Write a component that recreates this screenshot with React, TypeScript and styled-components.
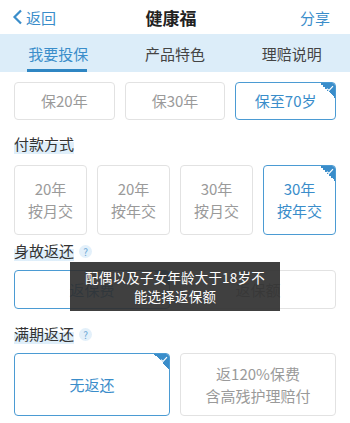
import React from 'react'
import styled, { createGlobalStyle } from 'styled-components'

const BLUE = '#3a8dca'

const GlobalStyle = createGlobalStyle`
  html, body {
    margin: 0;
    padding: 0;
    background: #fff;
  }
  body {
    font-family: "Noto Sans CJK SC", "Noto Sans", sans-serif;
    -webkit-font-smoothing: antialiased;
  }
  * { box-sizing: border-box; }
`

const Page = styled.div`
  width: 350px;
  height: 423px;
  overflow: hidden;
  background: #fff;
`

const Header = styled.header`
  height: 34px;
  display: grid;
  grid-template-columns: 1fr auto 1fr;
  align-items: center;
  padding: 0 20px 0 12px;
`

const Back = styled.div`
  display: flex;
  align-items: center;
  gap: 3px;
  color: ${BLUE};
  font-size: 15px;
`

const Title = styled.h1`
  margin: 0;
  font-size: 17px;
  font-weight: 700;
  color: #222;
`

const Share = styled.div`
  justify-self: end;
  color: ${BLUE};
  font-size: 15px;
`

const TabBar = styled.nav`
  height: 38px;
  background: #dcedf9;
  display: grid;
  grid-template-columns: repeat(3, 1fr);
`

const Tab = styled.div<{ $active?: boolean }>`
  position: relative;
  display: flex;
  align-items: center;
  justify-content: center;
  font-size: 15px;
  color: ${({ $active }) => ($active ? BLUE : '#444')};

  &::after {
    content: '';
    display: ${({ $active }) => ($active ? 'block' : 'none')};
    position: absolute;
    bottom: 0;
    left: 50%;
    width: 60px;
    margin-left: -31px;
    height: 3px;
    background: #2f86c3;
  }
`

const Content = styled.main`
  padding: 10px 14px 0;
`

const Options = styled.div<{ $cols: number; $h: number }>`
  display: grid;
  grid-template-columns: repeat(${({ $cols }) => $cols}, 1fr);
  gap: 10px;
  height: ${({ $h }) => $h}px;
`

const Option = styled.div<{ $selected?: boolean }>`
  position: relative;
  display: flex;
  flex-direction: column;
  align-items: center;
  justify-content: center;
  border: 1px solid ${({ $selected }) => ($selected ? '#4b9bd3' : '#e2e2e2')};
  border-radius: 4px;
  font-size: 15px;
  line-height: 22px;
  color: ${({ $selected }) => ($selected ? BLUE : '#9a9a9a')};
  overflow: hidden;
`

const Corner = styled.span`
  position: absolute;
  top: 0;
  right: 0;
  width: 15px;
  height: 15px;
  background: linear-gradient(45deg, transparent 50%, #3a8dca 50%);
  display: flex;
  align-items: flex-start;
  justify-content: flex-end;
`

const Label = styled.div<{ $top: number; $bottom: number }>`
  display: flex;
  align-items: center;
  gap: 5px;
  height: 22px;
  margin: ${({ $top, $bottom }) => `${$top}px 0 ${$bottom}px`};
  font-size: 15px;
  color: #333;
`

const LabelText = styled.span`
  background: linear-gradient(to bottom, transparent 45%, rgba(210, 232, 248, 0.7) 45%);
`

const Help = styled.span`
  display: inline-flex;
  align-items: center;
  justify-content: center;
  width: 13px;
  height: 13px;
  margin-top: 3px;
  border-radius: 50%;
  background: #e3f0fa;
  color: #6ba8d6;
  font-size: 10px;
  line-height: 1;
`

const ToastRow = styled.div`
  position: relative;
`

const Toast = styled.div`
  position: absolute;
  top: -8px;
  left: 56px;
  width: 210px;
  height: 49px;
  background: rgba(48, 48, 48, 0.92);
  color: #fff;
  font-size: 13.5px;
  line-height: 19px;
  text-align: center;
  display: flex;
  flex-direction: column;
  align-items: center;
  justify-content: center;
  letter-spacing: 0.2px;
`

const Check = () => (
  <Corner>
    <svg width="8" height="7" viewBox="0 0 8 7" style={{ marginTop: 2, marginRight: 1 }}>
      <path d="M1 3.6 L3 5.4 L7 1.2" fill="none" stroke="#fff" strokeWidth="1.2" />
    </svg>
  </Corner>
)

const App = () => {
  return (
    <Page>
      <GlobalStyle />
      <Header>
        <Back>
          <svg width="11" height="16" viewBox="0 0 11 16">
            <path d="M9 1.5 L2.5 8 L9 14.5" fill="none" stroke={BLUE} strokeWidth="2.2" />
          </svg>
          返回
        </Back>
        <Title>健康福</Title>
        <Share>分享</Share>
      </Header>
      <TabBar>
        <Tab $active>我要投保</Tab>
        <Tab>产品特色</Tab>
        <Tab>理赔说明</Tab>
      </TabBar>
      <Content>
        <Options $cols={3} $h={38}>
          <Option>保20年</Option>
          <Option>保30年</Option>
          <Option $selected>
            保至70岁
            <Check />
          </Option>
        </Options>

        <Label $top={12} $bottom={11}>
          <LabelText>付款方式</LabelText>
        </Label>
        <Options $cols={4} $h={70}>
          <Option>
            <span>20年</span>
            <span>按月交</span>
          </Option>
          <Option>
            <span>20年</span>
            <span>按年交</span>
          </Option>
          <Option>
            <span>30年</span>
            <span>按月交</span>
          </Option>
          <Option $selected>
            <span>30年</span>
            <span>按年交</span>
            <Check />
          </Option>
        </Options>

        <Label $top={4} $bottom={9}>
          <LabelText>身故返还</LabelText>
          <Help>?</Help>
        </Label>
        <ToastRow>
          <Options $cols={2} $h={39}>
            <Option $selected>
              返保费
              <Check />
            </Option>
            <Option>返保额</Option>
          </Options>
          <Toast>
            <span>配偶以及子女年龄大于18岁不</span>
            <span>能选择返保额</span>
          </Toast>
        </ToastRow>

        <Label $top={13} $bottom={9}>
          <LabelText>满期返还</LabelText>
          <Help>?</Help>
        </Label>
        <Options $cols={2} $h={63}>
          <Option $selected>
            无返还
            <Check />
          </Option>
          <Option>
            <span>返120%保费</span>
            <span>含高残护理赔付</span>
          </Option>
        </Options>
      </Content>
    </Page>
  )
}

export default App
